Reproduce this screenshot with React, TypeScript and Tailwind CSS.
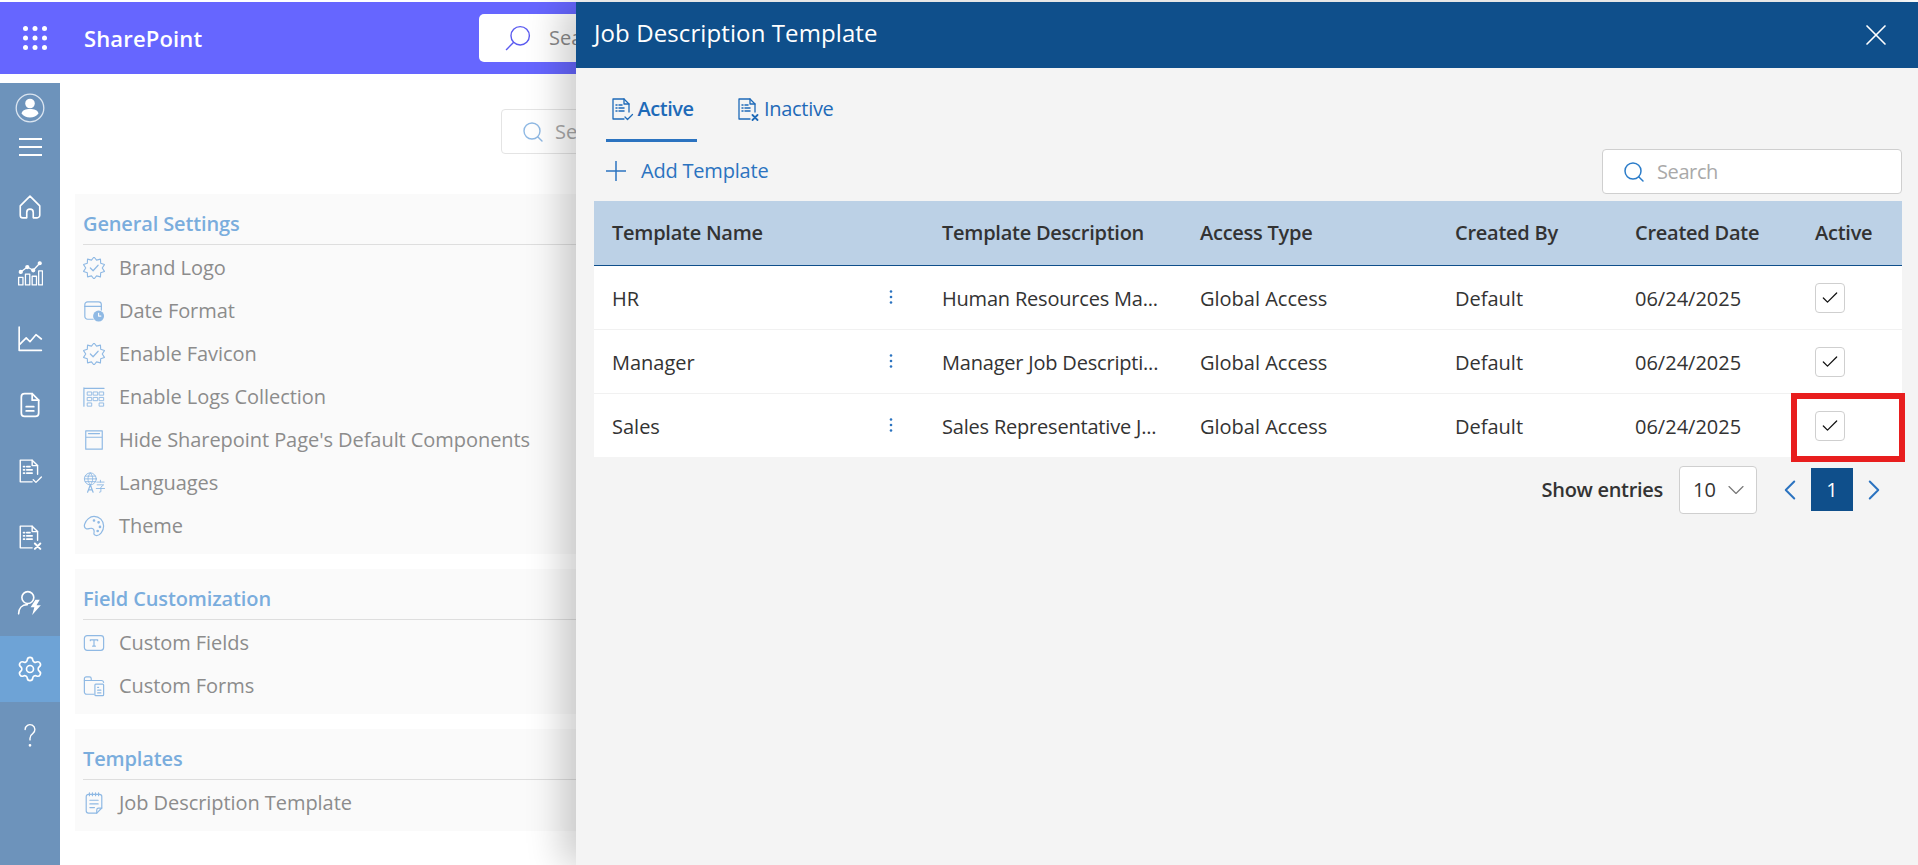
import { ChevronDown, ChevronLeft, ChevronRight, Search, Settings, X, Check } from "lucide-react"
import type { ReactNode } from "react"

const font = "font-['Open_Sans','Noto_Sans',sans-serif]"

function Svg({ children, className, w = 24 }: { children: ReactNode; className?: string; w?: number }) {
  return (
    <svg
      viewBox={`0 0 ${w} 24`}
      fill="none"
      stroke="currentColor"
      strokeWidth="1.3"
      strokeLinecap="round"
      strokeLinejoin="round"
      className={className}
    >
      {children}
    </svg>
  )
}

// scalloped seal outline, 10 points
const sealPath =
  Array.from({ length: 20 }, (_, i) => {
    const r = i % 2 ? 9 : 12
    const a = (i * Math.PI) / 10
    return `${i ? "L" : "M"}${(12 + r * Math.sin(a)).toFixed(2)} ${(12 - r * Math.cos(a)).toFixed(2)}`
  }).join("") + "z"

function Badge({ className }: { className?: string }) {
  return (
    <Svg className={className}>
      <path d={sealPath} strokeWidth="1.200" />
      <path d="M8 12l3 3 5.500-6" />
    </Svg>
  )
}

function DocList({ className, mark }: { className?: string; mark: "check" | "x" }) {
  return (
    <Svg className={className}>
      <path d="M14 22H3V2h11l5 5v8" />
      <path d="M14 2v5h5" />
      <path d="M6 8h1M9 8h3M6 11h1M9 11h5M6 14h1M9 14h5" strokeWidth="1.500" />
      {mark === "check" ? <path d="M15 20l2.500 2.500 5-5" /> : <path d="M16.500 18l5 5M21.500 18l-5 5" strokeWidth="1.800" />}
    </Svg>
  )
}

const generalItems: { label: string; icon: ReactNode }[] = [
  { label: "Brand Logo", icon: <Badge className="size-[22px]" /> },
  {
    label: "Date Format",
    icon: (
      <Svg className="size-[22px]">
        <path d="M11 21H5a3 3 0 0 1-3-3V5a3 3 0 0 1 3-3h12a3 3 0 0 1 3 3v6" />
        <path d="M2 7h18" />
        <circle cx="17" cy="17.500" r="6" fill="currentColor" stroke="none" />
        <path d="M17 14.500v3h2.500" stroke="#fafafa" />
      </Svg>
    ),
  },
  { label: "Enable Favicon", icon: <Badge className="size-[22px]" /> },
  {
    label: "Enable Logs Collection",
    icon: (
      <Svg className="size-[22px]">
        <path d="M1 2v20M1 2.500h22" />
        <path d="M5 6.500h4.500v3.500H5zM11.500 6.500H16v3.500h-4.500zM18 6.500h4.500v3.500H18zM5 12.500h4.500V16H5zM11.500 12.500H16V16h-4.500zM18 12.500h4.500V16H18zM5 18.500h4.500V22H5zM18 18.500h4.500V22H18z" strokeWidth="1" strokeLinejoin="miter" />
      </Svg>
    ),
  },
  {
    label: "Hide Sharepoint Page's Default Components",
    icon: (
      <Svg className="size-[22px]">
        <path d="M3 2h18v20H3zM3 9h18M6 5h12" />
      </Svg>
    ),
  },
  {
    label: "Languages",
    icon: (
      <Svg className="size-[22px]">
        <circle cx="8" cy="7.500" r="6.500" strokeWidth="1" />
        <path d="M1.500 7.500h13M8 1c-3.500 4-3.500 9 0 13M8 1c3.500 4 3.500 9 0 13M2.500 4.500h11M2.500 10.500h11" strokeWidth="1" />
        <path d="M5 22l3-8 3 8M6 19.500h4" />
        <path d="M15 11h8M19 9v2M15.500 14h7l-3 2.500v5l-1.500.5M14.500 18h9" strokeWidth="1" />
      </Svg>
    ),
  },
  {
    label: "Theme",
    icon: (
      <Svg className="size-[22px]">
        <path d="M12 1.500c6 0 10.500 4.500 10.500 10.500S18 22.500 15 22.500c-2.500 0-3.500-1.500-3-3.500.500-2.500-.500-4-2.500-4.500-2.500-.500-4 1.500-6 .500-2-1-2.500-3-1.500-5.500C3.500 5.500 7.500 1.500 12 1.500z" />
        <circle cx="12" cy="6" r=".8" fill="currentColor" />
        <circle cx="17" cy="8" r=".8" fill="currentColor" />
        <circle cx="18.500" cy="13" r=".8" fill="currentColor" />
        <circle cx="16" cy="17.500" r=".8" fill="currentColor" />
      </Svg>
    ),
  },
]

const fieldItems: { label: string; icon: ReactNode }[] = [
  {
    label: "Custom Fields",
    icon: (
      <Svg className="size-[22px]">
        <rect x="1.500" y="4" width="21" height="16" rx="3" />
        <path d="M8 8.500h8M12 8.500v7M10.500 15.500h3M8 8.500v1M16 8.500v1" />
      </Svg>
    ),
  },
  {
    label: "Custom Forms",
    icon: (
      <Svg className="size-[22px]">
        <path d="M12 21H4a2.500 2.500 0 0 1-2.500-2.500V4A2 2 0 0 1 3.500 2H7a2 2 0 0 1 2 2v2h11a2.500 2.500 0 0 1 2.500 2" />
        <path d="M1.500 6H9" />
        <rect x="13" y="10" width="9.500" height="12.500" rx="1" />
        <path d="M16 13.500h1M16 16.500h3.500M16 19.500h3.500" />
      </Svg>
    ),
  },
]

const templateItems: { label: string; icon: ReactNode }[] = [
  {
    label: "Job Description Template",
    icon: (
      <Svg className="size-[22px]">
        <path d="M15 23H6a2.500 2.500 0 0 1-2.500-2.500V5A2.500 2.500 0 0 1 6 2.500h12A2.500 2.500 0 0 1 20.500 5v12.500z" />
        <path d="M7 1v3M10.300 1v3M13.700 1v3M17 1v3M7.500 9h9M7.500 13h9M7.500 17h5M15 23v-3.500a2 2 0 0 1 2-2h3.500" />
      </Svg>
    ),
  },
]

function Section({ title, items, className }: { title: string; items: { label: string; icon: ReactNode }[]; className: string }) {
  return (
    <section className={`bg-[#fafafa] pl-2 pr-0 ${className}`}>
      <h2 className="flex h-[51px] items-end border-b border-[#dedede] pb-[6px] text-[20px] font-semibold leading-[28px] tracking-[-0.13px] text-[#7aaddd]">
        {title}
      </h2>
      <ul className="pt-[1px]">
        {items.map((it) => (
          <li key={it.label} className="flex h-[43px] items-center gap-[14px] text-[20px] tracking-[-0.06px] text-[#8c8c8c]">
            <span className="flex w-[22px] shrink-0 justify-center text-[#8fb9e4]">{it.icon}</span>
            {it.label}
          </li>
        ))}
      </ul>
    </section>
  )
}

const navIcons: { key: string; active?: boolean; icon: ReactNode }[] = [
  {
    key: "home",
    icon: (
      <Svg className="size-[26px]">
        <path d="M3 11l9-9 9 9v8.500a2.500 2.500 0 0 1-2.500 2.500H15v-5a3 3 0 0 0-6 0v5H5.500A2.500 2.500 0 0 1 3 19.500z" strokeWidth="1.500" />
      </Svg>
    ),
  },
  {
    key: "bars",
    icon: (
      <Svg className="size-[26px]">
        <path d="M1.500 16h4v7h-4zM7.800 13h4v10h-4zM14 15h4v8h-4zM20 10h3.500v13H20z" strokeWidth="1.200" />
        <path d="M3.500 11l6-4.500 5.500 3L21 3" strokeWidth="1.200" />
        <circle cx="3.500" cy="11" r="1.300" fill="currentColor" />
        <circle cx="9.500" cy="6.500" r="1.300" fill="currentColor" />
        <circle cx="15" cy="9.500" r="1.300" fill="currentColor" />
        <circle cx="21" cy="3" r="1.300" fill="currentColor" />
      </Svg>
    ),
  },
  {
    key: "line",
    icon: (
      <Svg className="size-[26px]">
        <path d="M2 1v21.500h20.500" strokeWidth="1.500" />
        <path d="M2.500 17l6-6 3.500 3.500 5.500-6.500 5 4" strokeWidth="1.500" />
      </Svg>
    ),
  },
  {
    key: "doc",
    icon: (
      <Svg className="size-[26px]">
        <path d="M14 1.500H7A3 3 0 0 0 4 4.500v15a3 3 0 0 0 3 3h10a3 3 0 0 0 3-3V7.500z" strokeWidth="1.600" />
        <path d="M14 1.500v6h6M8.500 13.500h7M8.500 17.500h7" strokeWidth="1.600" />
      </Svg>
    ),
  },
  { key: "check", icon: <DocList className="size-[26px]" mark="check" /> },
  { key: "x", icon: <DocList className="size-[26px]" mark="x" /> },
  {
    key: "user",
    icon: (
      <Svg className="size-[26px]">
        <circle cx="10" cy="7" r="5.500" strokeWidth="1.500" />
        <path d="M1.500 22c0-5 3-8.500 8-8.500" strokeWidth="1.500" />
        <path d="M17 9l-4.500 7H16l-2 7 8-9h-4l3-5z" fill="currentColor" stroke="none" />
      </Svg>
    ),
  },
  { key: "gear", active: true, icon: <Settings className="size-[28px]" strokeWidth={1.4} /> },
  {
    key: "help",
    icon: (
      <Svg className="size-[26px]">
        <path d="M7.500 7a4.500 4.500 0 1 1 7 3.700c-1.500 1-2.500 2-2.500 4.300v1.500" strokeWidth="1.300" />
        <circle cx="12" cy="21.500" r=".6" fill="currentColor" />
      </Svg>
    ),
  },
]

const rows = [
  { name: "HR", desc: "Human Resources Ma..." },
  { name: "Manager", desc: "Manager Job Descripti..." },
  { name: "Sales", desc: "Sales Representative J..." },
]

export default function App() {
  return (
    <div className={`relative h-[865px] w-full overflow-hidden bg-white ${font}`}>
      <div className="pt-[2px]">
        {/* suite bar */}
        <header className="flex h-[72px] items-center bg-[#6666ff]">
          <div className="grid w-[70px] justify-center">
            <svg viewBox="0 0 24 24" className="size-[24px] fill-white">
              {[2.500, 12, 21.500].map((y) =>
                [2.500, 12, 21.500].map((x) => <circle key={`${x}-${y}`} cx={x} cy={y} r="2.500" />)
              )}
            </svg>
          </div>
          <span className="ml-[14px] w-[117px] whitespace-nowrap text-[22px] font-semibold tracking-[0.15px] text-white">SharePoint</span>
          <div className="ml-[278px] flex h-[48px] w-[400px] items-center gap-[18px] rounded-[5px] bg-white pl-[26px] text-[20px] text-[#8a8a8a]">
            <svg viewBox="0 0 24 24" fill="none" stroke="#5b5bf0" strokeWidth="1.300" className="size-[26px] -scale-x-100">
              <circle cx="10" cy="10" r="8.500" />
              <path d="M16 16l7 7" />
            </svg>
            Search
          </div>
        </header>

        <div className="mt-[9px] flex h-[782px]">
          {/* left rail */}
          <aside className="w-[60px] shrink-0 bg-[#6d93bb] text-white">
            <div className="flex h-[91px] flex-col items-center pt-[10px]">
              <svg viewBox="0 0 30 30" className="size-[30px]" fill="none">
                <circle cx="15" cy="15" r="13.800" stroke="#dbe5f0" strokeWidth="1.300" />
                <circle cx="15" cy="10.500" r="4.800" fill="white" />
                <path d="M6.500 20.500c1-3.500 4-4.500 8.500-4.500s7.500 1 8.500 4.500c-2 2.500-5 4-8.500 4s-6.500-1.500-8.500-4z" fill="white" />
              </svg>
              <div className="mt-[15px] flex w-[23px] flex-col gap-[6px]">
                <span className="h-[2px] bg-white" />
                <span className="h-[2px] bg-white" />
                <span className="h-[2px] bg-white" />
              </div>
            </div>
            {navIcons.map((n) => (
              <div key={n.key} className={`flex h-[66px] items-center justify-center ${n.active ? "bg-[#6ea3d6]" : ""}`}>
                {n.icon}
              </div>
            ))}
          </aside>

          {/* dimmed settings page */}
          <main className="ml-[15px] flex-1">
            <div className="ml-[426px] mt-[26px] flex h-[45px] w-[300px] items-center gap-[10px] rounded-[4px] border border-[#e4e4e4] pl-[19px] text-[20px] text-[#a9a9a9]">
              <Search className="size-[24px] text-[#8fb9e4]" strokeWidth={1.4} />
              Search
            </div>
            <Section title="General Settings" items={generalItems} className="mt-[40px] h-[360px]" />
            <Section title="Field Customization" items={fieldItems} className="mt-[15px] h-[145px]" />
            <Section title="Templates" items={templateItems} className="mt-[15px] h-[102px]" />
          </main>
        </div>
      </div>

      {/* side panel */}
      <div className="absolute bottom-0 left-[576px] right-0 top-[2px] bg-[#f4f4f4] shadow-[-14px_0_34px_rgba(0,0,0,0.2)]">
        <div className="flex h-[66px] items-center justify-between bg-[#0f4f8b] pl-[18px] pr-[24px] text-white">
          <h1 className="pb-[4px] text-[24px] leading-none tracking-[0.1px]">Job Description Template</h1>
          <X className="size-[36px]" strokeWidth={1.1} />
        </div>

        <div className="pl-[18px] pr-[16px]">
          {/* tabs */}
          <div className="ml-[12px] flex h-[74px] text-[20px] text-[#1e6ab8]">
            <div className="flex h-full w-[91px] items-center justify-center gap-[4px] border-b-[3px] border-[#2b73c0] pt-[10px] font-semibold tracking-[-0.5px]">
              <DocList className="size-[24px]" mark="check" />
              Active
            </div>
            <div className="ml-[39px] flex items-center gap-[4px] pt-[7px] tracking-[-0.3px]">
              <DocList className="size-[24px]" mark="x" />
              Inactive
            </div>
          </div>

          {/* toolbar */}
          <div className="flex h-[59px] items-center justify-between">
            <div className="ml-[12px] flex items-center gap-[15px] pb-[2px] text-[20px] tracking-[-0.2px] text-[#2b73c0]">
              <svg viewBox="0 0 20 20" fill="none" stroke="currentColor" strokeWidth="1.500" className="size-[20px]">
                <path d="M0 10h20M10 0v20" />
              </svg>
              Add Template
            </div>
            <div className="flex h-[45px] w-[300px] items-center gap-[11px] rounded-[4px] border border-[#cfcfcf] bg-white pl-[19px] text-[20px] tracking-[-0.4px] text-[#a9a9a9]">
              <Search className="size-[24px] text-[#2b7cc9]" strokeWidth={1.5} />
              Search
            </div>
          </div>

          {/* grid */}
          <table className="w-[1308px] table-fixed border-collapse text-left text-[20px] text-[#333]">
            <colgroup>
              <col className="w-[330px]" />
              <col className="w-[258px]" />
              <col className="w-[255px]" />
              <col className="w-[180px]" />
              <col className="w-[180px]" />
              <col className="w-[105px]" />
            </colgroup>
            <thead>
              <tr className="h-[64px] border-b border-[#0f4f8b] bg-[#bcd1e6]">
                {["Template Name", "Template Description", "Access Type", "Created By", "Created Date", "Active"].map((h) => (
                  <th key={h} className="whitespace-nowrap pl-[18px] pt-[1px] font-semibold tracking-[-0.25px]">
                    {h}
                  </th>
                ))}
              </tr>
            </thead>
            <tbody className="bg-white">
              {rows.map((r) => (
                <tr key={r.name} className="h-[64px] border-b border-[#f1f1f1] last:border-b-0">
                  <td className="pl-[18px] pr-[25px] pt-[3px]">
                    <div className="flex items-center justify-between">
                      {r.name}
                      <svg viewBox="0 0 16 16" className="size-[16px] -translate-y-[2px] fill-[#2b73c0]">
                        <circle cx="8" cy="2.500" r="1.300" />
                        <circle cx="8" cy="8" r="1.300" />
                        <circle cx="8" cy="13.500" r="1.300" />
                      </svg>
                    </div>
                  </td>
                  <td className="whitespace-nowrap pl-[18px] pt-[3px] tracking-[-0.2px]">{r.desc}</td>
                  <td className="pl-[18px] pt-[3px]">Global Access</td>
                  <td className="pl-[18px] pt-[3px]">Default</td>
                  <td className="pl-[18px] pt-[3px]">06/24/2025</td>
                  <td className="pl-[18px] pt-[1px]">
                    <span className="flex size-[30px] items-center justify-center rounded-[4px] border border-[#cfcfcf] bg-white">
                      <Check className="size-[20px] text-[#111]" strokeWidth={1.5} />
                    </span>
                  </td>
                </tr>
              ))}
            </tbody>
          </table>

          {/* pager */}
          <div className="flex h-[65px] items-center justify-end pr-[11px] text-[20px] text-[#333]">
            <span className="pt-[1px] font-semibold tracking-[-0.3px]">Show entries</span>
            <div className="ml-[16px] flex h-[48px] w-[78px] items-center justify-between rounded-[4px] border border-[#cfcfcf] bg-white pl-[13px] pr-[6px] text-[20px]">
              10
              <ChevronDown className="size-[28px] text-[#777]" strokeWidth={1} />
            </div>
            <ChevronLeft className="ml-[16px] size-[34px] text-[#2b73c0]" strokeWidth={1.4} />
            <span className="ml-[4px] flex h-[43px] w-[42px] items-center justify-center bg-[#0f4f8b] text-white">1</span>
            <ChevronRight className="ml-[4px] size-[34px] text-[#2b73c0]" strokeWidth={1.4} />
          </div>
        </div>
      </div>

      {/* red callout drawn on the screenshot */}
      <div className="absolute left-[1791px] top-[393px] h-[69px] w-[114px] border-[6px] border-[#e81e1e]" />
    </div>
  )
}
